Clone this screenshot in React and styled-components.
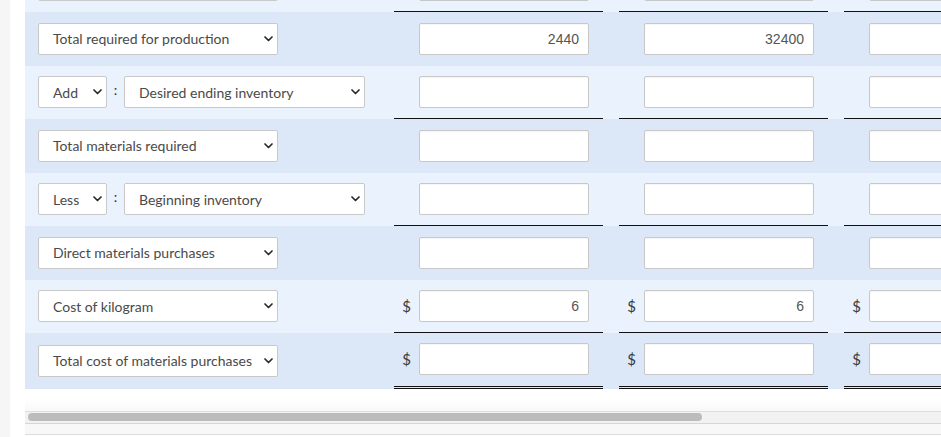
import React from "react";
import styled, { createGlobalStyle } from "styled-components";

const GlobalStyle = createGlobalStyle`
  html, body {
    margin: 0;
    padding: 0;
    background: #ffffff;
    overflow: hidden;
  }
  body {
    font-family: 'Lato', 'Liberation Sans', sans-serif;
  }
`;

const Page = styled.div`
  display: flex;
  width: 941px;
  height: 437px;
  overflow: hidden;
`;

const LeftRail = styled.div`
  flex: 0 0 10px;
  background: #f6f6f6;
`;

const Main = styled.div`
  flex: 1;
  margin-left: 15px;
  min-width: 0;
  display: flex;
  flex-direction: column;
`;

const TableViewport = styled.div`
  overflow: hidden;
  margin-top: -41.5px;
`;

const Table = styled.div`
  width: 1044px;
  display: flex;
  flex-direction: column;
`;

const Row = styled.div`
  display: flex;
  align-items: stretch;
  height: ${(p) => p.$height}px;
  background: ${(p) => (p.$dark ? "#dce8f7" : "#eaf3fd")};
`;

const LabelCell = styled.div`
  flex: 0 0 369px;
  box-sizing: border-box;
  padding-left: 13px;
  display: flex;
  align-items: center;
`;

const SelectBox = styled.div`
  box-sizing: border-box;
  width: ${(p) => p.$width}px;
  height: 32px;
  background: #ffffff;
  border: 1px solid #c9c9c9;
  border-radius: 2px;
  display: flex;
  align-items: center;
  justify-content: space-between;
  padding: 0 4px 0 14px;
  font-size: 14px;
  color: #4a4a4a;
  white-space: nowrap;
  overflow: hidden;
`;

const Colon = styled.span`
  width: 17px;
  text-align: center;
  font-size: 14px;
  color: #333;
  align-self: center;
  margin-top: -6px;
`;

const AmountCell = styled.div`
  flex: 0 0 209px;
  margin-right: 16px;
  box-sizing: border-box;
  display: flex;
  align-items: center;
  border-bottom: ${(p) =>
    p.$line === "double"
      ? "3px double #111"
      : p.$line === "single"
      ? "1px solid #111"
      : "none"};
`;

const Currency = styled.span`
  flex: 0 0 25px;
  text-align: center;
  font-size: 15px;
  color: #3a3a3a;
`;

const Amount = styled.input`
  box-sizing: border-box;
  width: 170px;
  height: 32px;
  margin-left: ${(p) => (p.$dollar ? 0 : 25)}px;
  border: 1px solid #c8c8c8;
  border-radius: 2px;
  background: #ffffff;
  box-shadow: inset 0 1px 1px rgba(0, 0, 0, 0.04);
  padding: 0 9px;
  text-align: right;
  font-family: 'Liberation Sans', Arial, sans-serif;
  font-size: 14px;
  color: #555555;
  outline: none;
`;

const Spacer = styled.div`
  height: ${(p) => p.$h}px;
  background: linear-gradient(#ffffff 50%, #f8f8f8);
`;

const ScrollTrack = styled.div`
  height: 13px;
  box-sizing: border-box;
  border-top: 1px solid #dedede;
  border-bottom: 1px solid #d6d6d6;
  background: #f2f2f2;
  display: flex;
  align-items: center;
  padding-left: 3px;
`;

const ScrollThumb = styled.div`
  width: 674px;
  height: 8px;
  border-radius: 4px;
  background: #bcbcbc;
`;

const Footer = styled.div`
  height: 10px;
  background: #f8f8f8;
  border-bottom: 1px solid #dcdcdc;
`;

const Chevron = () => (
  <svg width="9" height="6" viewBox="0 0 9 6">
    <polyline
      points="1,1 4.5,4.5 8,1"
      fill="none"
      stroke="#2b2b2b"
      strokeWidth="1.7"
      strokeLinecap="round"
      strokeLinejoin="round"
    />
  </svg>
);

const Select = ({ width, children }) => (
  <SelectBox $width={width}>
    <span>{children}</span>
    <Chevron />
  </SelectBox>
);

const rows = [
  { label: "", line: "single" },
  { label: "Total required for production", values: ["2440", "32400", ""] },
  { op: "Add", label: "Desired ending inventory", line: "single" },
  { label: "Total materials required" },
  { op: "Less", label: "Beginning inventory", line: "single" },
  { label: "Direct materials purchases" },
  { label: "Cost of kilogram", values: ["6", "6", ""], dollar: true, line: "single" },
  { label: "Total cost of materials purchases", dollar: true, line: "double" },
];

export default function App() {
  return (
    <>
      <GlobalStyle />
      <Page>
        <LeftRail />
        <Main>
          <TableViewport>
            <Table>
              {rows.map((row, i) => (
                <Row key={i} $dark={i % 2 === 1} $height={i === rows.length - 1 ? 55.5 : 53.5}>
                  <LabelCell>
                    {row.op ? (
                      <>
                        <Select width={69}>{row.op}</Select>
                        <Colon>:</Colon>
                        <Select width={241}>{row.label}</Select>
                      </>
                    ) : (
                      <Select width={240}>{row.label}</Select>
                    )}
                  </LabelCell>
                  {[0, 1, 2].map((c) => (
                    <AmountCell key={c} $line={row.line}>
                      {row.dollar && <Currency>$</Currency>}
                      <Amount
                        $dollar={row.dollar}
                        readOnly
                        value={row.values ? row.values[c] : ""}
                      />
                    </AmountCell>
                  ))}
                </Row>
              ))}
            </Table>
          </TableViewport>
          <Spacer $h={22} />
          <ScrollTrack>
            <ScrollThumb />
          </ScrollTrack>
          <Footer />
        </Main>
      </Page>
    </>
  );
}
